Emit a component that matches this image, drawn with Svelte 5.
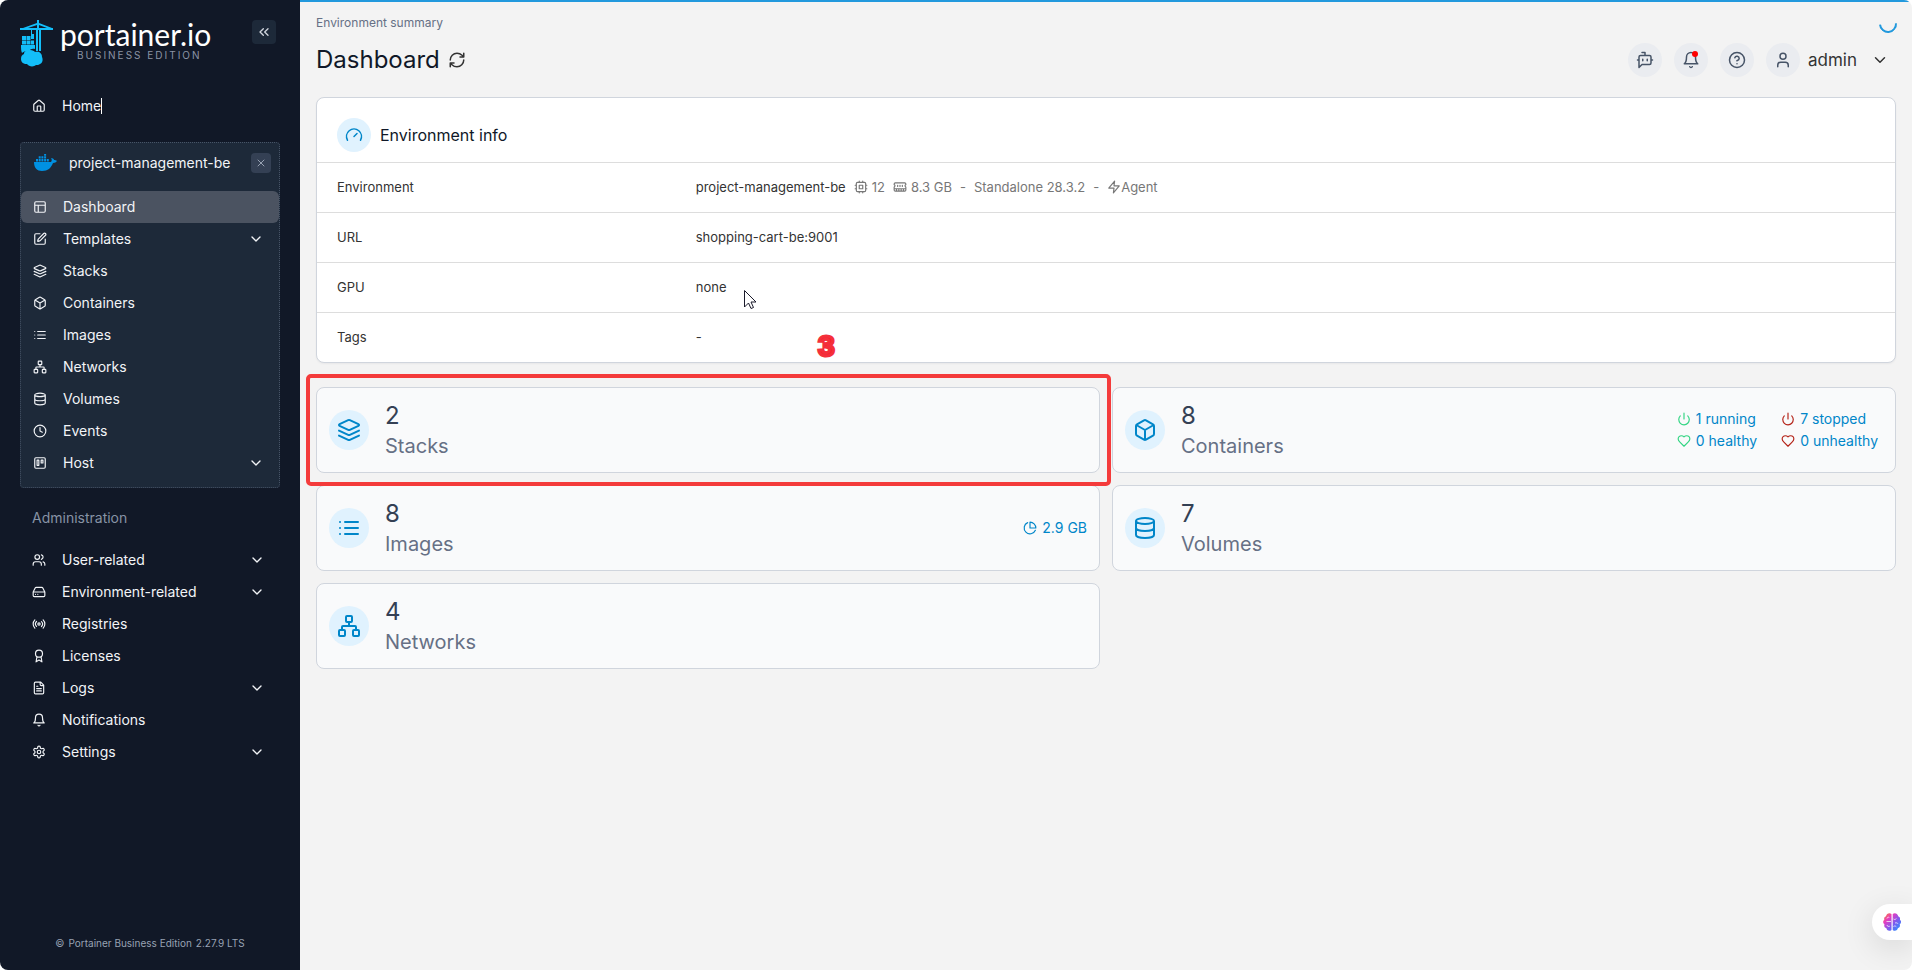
<script>
	const circle = (cx, cy, r) => `M${cx - r} ${cy}a${r} ${r} 0 1 0 ${r * 2} 0a${r} ${r} 0 1 0 ${-r * 2} 0`;

	const icons = {
		home: 'M15 21v-8a1 1 0 0 0-1-1h-4a1 1 0 0 0-1 1v8M3 10a2 2 0 0 1 .709-1.528l7-5.999a2 2 0 0 1 2.582 0l7 5.999A2 2 0 0 1 21 10v9a2 2 0 0 1-2 2H5a2 2 0 0 1-2-2z',
		layout: 'M5 3h14a2 2 0 0 1 2 2v14a2 2 0 0 1-2 2H5a2 2 0 0 1-2-2V5a2 2 0 0 1 2-2zM3 9h18M9 21V9',
		edit: 'M12 3H5a2 2 0 0 0-2 2v14a2 2 0 0 0 2 2h14a2 2 0 0 0 2-2v-7M18.375 2.625a1 1 0 0 1 3 3l-9.013 9.014a2 2 0 0 1-.853.505l-2.873.84a.5.5 0 0 1-.62-.62l.84-2.873a2 2 0 0 1 .506-.852z',
		layers: 'm12.83 2.18a2 2 0 0 0-1.66 0L2.6 6.08a1 1 0 0 0 0 1.83l8.58 3.91a2 2 0 0 0 1.66 0l8.58-3.9a1 1 0 0 0 0-1.83ZM22 17.65l-9.17 4.16a2 2 0 0 1-1.66 0L2 17.65M22 12.65l-9.17 4.16a2 2 0 0 1-1.66 0L2 12.65',
		box: 'M21 8a2 2 0 0 0-1-1.73l-7-4a2 2 0 0 0-2 0l-7 4A2 2 0 0 0 3 8v8a2 2 0 0 0 1 1.73l7 4a2 2 0 0 0 2 0l7-4A2 2 0 0 0 21 16ZM3.3 7l8.7 5 8.7-5M12 22V12',
		list: 'M8 6h13M8 12h13M8 18h13M3 6h.01M3 12h.01M3 18h.01',
		network: 'M17 16h4a1 1 0 0 1 1 1v4a1 1 0 0 1-1 1h-4a1 1 0 0 1-1-1v-4a1 1 0 0 1 1-1zM3 16h4a1 1 0 0 1 1 1v4a1 1 0 0 1-1 1H3a1 1 0 0 1-1-1v-4a1 1 0 0 1 1-1zM10 2h4a1 1 0 0 1 1 1v4a1 1 0 0 1-1 1h-4a1 1 0 0 1-1-1V3a1 1 0 0 1 1-1zM5 16v-3a1 1 0 0 1 1-1h12a1 1 0 0 1 1 1v3M12 12V8',
		database: 'M3 5a9 3 0 1 0 18 0a9 3 0 1 0-18 0M3 5v14a9 3 0 0 0 18 0V5M3 12a9 3 0 0 0 18 0',
		clock: circle(12, 12, 10) + 'M12 6v6l4 2',
		trello: 'M5 3h14a2 2 0 0 1 2 2v14a2 2 0 0 1-2 2H5a2 2 0 0 1-2-2V5a2 2 0 0 1 2-2zM7 7h3v9H7zM14 7h3v5h-3z',
		users: 'M16 21v-2a4 4 0 0 0-4-4H6a4 4 0 0 0-4 4v2M22 21v-2a4 4 0 0 0-3-3.87M16 3.13a4 4 0 0 1 0 7.75' + circle(9, 7, 4),
		drive: 'M22 12H2M5.45 5.11 2 12v6a2 2 0 0 0 2 2h16a2 2 0 0 0 2-2v-6l-3.45-6.89A2 2 0 0 0 16.76 4H7.24a2 2 0 0 0-1.79 1.11zM6 16h.01M10 16h.01',
		radio: 'M4.9 19.1C1 15.2 1 8.8 4.9 4.9M7.8 16.2c-2.3-2.3-2.3-6.1 0-8.5M16.2 7.8c2.3 2.3 2.3 6.1 0 8.5M19.1 4.9C23 8.8 23 15.1 19.1 19' + circle(12, 12, 2),
		award: 'M15.477 12.89 17 22l-5-3-5 3 1.523-9.11' + circle(12, 8, 6),
		file: 'M15 2H6a2 2 0 0 0-2 2v16a2 2 0 0 0 2 2h12a2 2 0 0 0 2-2V7ZM14 2v4a2 2 0 0 0 2 2h4M10 9H8M16 13H8M16 17H8',
		bell: 'M6 8a6 6 0 0 1 12 0c0 7 3 9 3 9H3s3-2 3-9M10.3 21a1.94 1.94 0 0 0 3.4 0',
		settings: 'M12.22 2h-.44a2 2 0 0 0-2 2v.18a2 2 0 0 1-1 1.73l-.43.25a2 2 0 0 1-2 0l-.15-.08a2 2 0 0 0-2.73.73l-.22.38a2 2 0 0 0 .73 2.73l.15.1a2 2 0 0 1 1 1.72v.51a2 2 0 0 1-1 1.74l-.15.09a2 2 0 0 0-.73 2.73l.22.38a2 2 0 0 0 2.73.73l.15-.08a2 2 0 0 1 2 0l.43.25a2 2 0 0 1 1 1.73V20a2 2 0 0 0 2 2h.44a2 2 0 0 0 2-2v-.18a2 2 0 0 1 1-1.73l.43-.25a2 2 0 0 1 2 0l.15.08a2 2 0 0 0 2.73-.73l.22-.39a2 2 0 0 0-.73-2.73l-.15-.08a2 2 0 0 1-1-1.74v-.5a2 2 0 0 1 1-1.74l.15-.09a2 2 0 0 0 .73-2.73l-.22-.38a2 2 0 0 0-2.73-.73l-.15.08a2 2 0 0 1-2 0l-.43-.25a2 2 0 0 1-1-1.73V4a2 2 0 0 0-2-2z' + circle(12, 12, 3),
		gauge: 'm12 14 4-4M3.34 19a10 10 0 1 1 17.32 0',
		refresh: 'M3 12a9 9 0 0 1 9-9 9.75 9.75 0 0 1 6.74 2.74L21 8M21 3v5h-5M21 12a9 9 0 0 1-9 9 9.75 9.75 0 0 1-6.74-2.74L3 16M8 16H3v5',
		bot: 'M12 6V2H8M8 18l-4 4V8a2 2 0 0 1 2-2h12a2 2 0 0 1 2 2v8a2 2 0 0 1-2 2ZM2 12h2M9 11v2M15 11v2M20 12h2',
		help: circle(12, 12, 10) + 'M9.09 9a3 3 0 0 1 5.83 1c0 2-3 3-3 3M12 17h.01',
		user: 'M19 21v-2a4 4 0 0 0-4-4H9a4 4 0 0 0-4 4v2' + circle(12, 7, 4),
		cpu: 'M6 4h12a2 2 0 0 1 2 2v12a2 2 0 0 1-2 2H6a2 2 0 0 1-2-2V6a2 2 0 0 1 2-2zM9 9h6v6H9zM15 2v2M15 20v2M2 15h2M2 9h2M20 15h2M20 9h2M9 2v2M9 20v2',
		memory: 'M6 19v-3M10 19v-3M14 19v-3M18 19v-3M8 11V9M16 11V9M12 11V9M2 15h20M2 7a2 2 0 0 1 2-2h16a2 2 0 0 1 2 2v1.1a2 2 0 0 0 0 3.837V17a2 2 0 0 1-2 2H4a2 2 0 0 1-2-2v-5.1a2 2 0 0 0 0-3.837Z',
		zap: 'M13 2 3 14h9l-1 8 10-12h-9l1-8z',
		pie: 'M21.21 15.89A10 10 0 1 1 8 2.83M22 12A10 10 0 0 0 12 2v10z',
		power: 'M12 2v10M18.4 6.6a9 9 0 1 1-12.77.04',
		heart: 'M19 14c1.49-1.46 3-3.21 3-5.5A5.5 5.5 0 0 0 16.5 3c-1.76 0-3 .5-4.5 2-1.5-1.5-2.74-2-4.5-2A5.5 5.5 0 0 0 2 8.5c0 2.3 1.5 4.05 3 5.5l7 7Z',
		down: 'm6 9 6 6 6-6',
		collapse: 'm11 17-5-5 5-5M18 17l-5-5 5-5',
		close: 'M18 6 6 18M6 6l12 12'
	};

	const envItems = [
		{ label: 'Dashboard', icon: 'layout', active: true },
		{ label: 'Templates', icon: 'edit', open: true },
		{ label: 'Stacks', icon: 'layers' },
		{ label: 'Containers', icon: 'box' },
		{ label: 'Images', icon: 'list' },
		{ label: 'Networks', icon: 'network' },
		{ label: 'Volumes', icon: 'database' },
		{ label: 'Events', icon: 'clock' },
		{ label: 'Host', icon: 'trello', open: true }
	];

	const adminItems = [
		{ label: 'User-related', icon: 'users', open: true },
		{ label: 'Environment-related', icon: 'drive', open: true },
		{ label: 'Registries', icon: 'radio' },
		{ label: 'Licenses', icon: 'award' },
		{ label: 'Logs', icon: 'file', open: true },
		{ label: 'Notifications', icon: 'bell' },
		{ label: 'Settings', icon: 'settings', open: true }
	];

	const cards = [
		{ count: 2, label: 'Stacks', icon: 'layers', marked: true },
		{ count: 8, label: 'Containers', icon: 'box', status: true },
		{ count: 8, label: 'Images', icon: 'list', size: '2.9 GB' },
		{ count: 7, label: 'Volumes', icon: 'database' },
		{ count: 4, label: 'Networks', icon: 'network' }
	];

	const statuses = [
		{ text: '1 running', icon: 'power', ok: true },
		{ text: '7 stopped', icon: 'power', ok: false },
		{ text: '0 healthy', icon: 'heart', ok: true },
		{ text: '0 unhealthy', icon: 'heart', ok: false }
	];
</script>

{#snippet icon(name, size = 14)}
	<svg class="icon" width={size} height={size} viewBox="0 0 24 24" aria-hidden="true">
		<path d={icons[name]} />
	</svg>
{/snippet}

{#snippet navItem(item)}
	<li>
		<a href="#{item.label.toLowerCase()}" class="nav-item" class:active={item.active}>
			{@render icon(item.icon)}
			<span class="nav-label">{item.label}</span>
			{#if item.open}{@render icon('down', 16)}{/if}
		</a>
	</li>
{/snippet}

<div class="page">
	<aside class="sidebar">
		<div class="brand">
			<a href="#home" class="logo" aria-label="portainer.io Business Edition">
				<svg width="34" height="47" viewBox="0 0 34 47" fill="#13bef9" aria-hidden="true">
					<path d="M17 0h2v3l13 5h1v2h-12v21h-2V10h-1v21h-2V10H0V8h3l14-5zM17 5 8 8h9zM19 5v3h8z" />
					<path d="M11 10h1v4h2v3h-3zM11 15h3v4h-3zM2 16h4v4H2zM6.500 16h4v4h-4zM2 20.500h4v4H2zM6.500 20.500h3.500v4H6.500zM10.500 20.500H14v4h-3.500z" />
					<path d="M1 25h14v4c-3-1-6 1-7 3-3-1-5 0-6 1-1-2-1-5-1-8z" />
					<path d="M10 30c3 0 4 1 5 2 4-1 7 1 7 5 1 2 1 6-2 7-1 1-3 1-4 1-2 2-7 2-9-1-4 0-6-2-6-5s1-4 3-5c0-3 3-4 6-4z" />
				</svg>
				<span class="wordmark">
					<span class="name">portainer.io</span>
					<span class="edition">BUSINESS EDITION</span>
				</span>
			</a>
			<button class="collapse" aria-label="Collapse sidebar">{@render icon('collapse', 16)}</button>
		</div>

		<a href="#home" class="nav-item">
			{@render icon('home')}
			<span class="home-label">Home</span>
		</a>

		<nav class="env" aria-label="Environment">
			<div class="env-head">
				<svg width="24" height="18" viewBox="0 0 24 18" fill="#0091e2" aria-hidden="true">
					<path d="M1 8h17c1-1 1-3 0-4 2 0 3 1 3 2 1 0 2 0 3 1-1 1-2 2-4 2-2 5-5 8-11 8-5 0-8-3-8-9zM3 5h2v2.500H3zM5.700 5h2v2.500h-2zM8.400 5h2v2.500h-2zM11.100 5h2v2.500h-2zM13.800 5h2v2.500h-2zM5.700 2.200h2v2.400h-2zM8.400 2.200h2v2.400h-2zM11.100 2.200h2v2.400h-2zM11.100 0h2v1.800h-2z" />
				</svg>
				<span class="nav-label">project-management-be</span>
				<button class="close" aria-label="Close environment">{@render icon('close', 12)}</button>
			</div>
			<ul>
				{#each envItems as item}{@render navItem(item)}{/each}
			</ul>
		</nav>

		<nav aria-labelledby="admin-title">
			<h2 id="admin-title">Administration</h2>
			<ul>
				{#each adminItems as item}{@render navItem(item)}{/each}
			</ul>
		</nav>

		<footer>
			<span>©</span>
			<span>Portainer Business Edition</span>
			<span>2.27.9 LTS</span>
		</footer>
	</aside>

	<main>
		<div class="progress"></div>
		<div class="spinner"></div>
		<div class="crumb">Environment summary</div>
		<header>
			<h1>Dashboard</h1>
			<button class="refresh" aria-label="Refresh">{@render icon('refresh', 18)}</button>
			<div class="tools">
				<button class="round" aria-label="Assistant">{@render icon('bot', 18)}</button>
				<button class="round" aria-label="Notifications">
					{@render icon('bell', 18)}
					<span class="dot"></span>
				</button>
				<button class="round" aria-label="Help">{@render icon('help', 18)}</button>
				<button class="account">
					<span class="round">{@render icon('user', 18)}</span>
					<span class="account-name">admin</span>
					{@render icon('down', 18)}
				</button>
			</div>
		</header>

		<section class="panel">
			<div class="panel-head">
				<span class="round blue">{@render icon('gauge', 18)}</span>
				<h2>Environment info</h2>
			</div>
			<table>
				<tbody>
					<tr>
						<th scope="row">Environment</th>
						<td>
							<div class="env-value">
								<span>project-management-be</span>
								<span class="muted spec">{@render icon('cpu')} 12</span>
								<span class="muted spec">{@render icon('memory')} 8.3 GB</span>
								<span class="muted">-</span>
								<span class="muted">Standalone 28.3.2</span>
								<span class="muted">-</span>
								<span class="muted agent">{@render icon('zap')}Agent</span>
							</div>
						</td>
					</tr>
					<tr>
						<th scope="row">URL</th>
						<td>shopping-cart-be:9001</td>
					</tr>
					<tr>
						<th scope="row">GPU</th>
						<td class="gpu">
							none
							<svg class="cursor" width="13" height="20" viewBox="0 0 13 20" aria-hidden="true">
								<path d="M.5.500v16.500l4-4 2.500 5.500 2.500-1-2.500-5.500h5z" fill="#fff" stroke="#1a1a2b" />
							</svg>
						</td>
					</tr>
					<tr>
						<th scope="row">Tags</th>
						<td>-</td>
					</tr>
				</tbody>
			</table>
			<span class="step">3</span>
		</section>

		<div class="cards">
			{#each cards as card}
				<a href="#{card.label.toLowerCase()}" class="card" class:marked={card.marked}>
					<span class="badge">{@render icon(card.icon, 24)}</span>
					<span class="figures">
						<span class="count">{card.count}</span>
						<span class="label">{card.label}</span>
					</span>
					{#if card.size}
						<span class="size">{@render icon('pie')}{card.size}</span>
					{/if}
					{#if card.status}
						<span class="statuses">
							{#each statuses as status}
								<span class="status" class:ok={status.ok}>{@render icon(status.icon)}{status.text}</span>
							{/each}
						</span>
					{/if}
				</a>
			{/each}
		</div>

		<button class="brain" aria-label="Open assistant">
			<svg width="18" height="18" viewBox="0 0 18 18" aria-hidden="true">
				<defs>
					<linearGradient id="brain-fill" x1="0" y1="0" x2="1" y2="1">
						<stop offset="0" stop-color="#ff8a1f" />
						<stop offset="0.3" stop-color="#e63cc0" />
						<stop offset="0.6" stop-color="#7b5cf0" />
						<stop offset="1" stop-color="#1ea0ff" />
					</linearGradient>
				</defs>
				<path
					fill="url(#brain-fill)"
					d="M8.500 1v16C6 19 3.500 17 3.300 15 1.500 14.500.8 13 1.500 11.500-.3 10-.3 8 1.300 6.800.8 5 1.500 3.800 3 3.300 3.500.500 6.500-.5 8.500 1zM9.700 1v16c2.500 2 5 0 5.200-2 1.800-.5 2.500-2 1.800-3.500 1.800-1.500 1.800-3.500.2-4.700.5-1.800-.2-3-1.700-3.500C14.700.500 11.700-.5 9.700 1z"
				/>
				<path
					d="M8 8.500H3.500M4 5.500c.2-1.300 1.300-1.500 2.300-1M4 12c.2 1.400 1.500 1.800 2.800 1.200M10.500 6c1 .8 2.300.5 2.800-.5M12 10c1.500-.5 2.500 0 3 .8M10.500 13.500c1-.8 2-.6 2.800.2"
					fill="none"
					stroke="#fff"
					stroke-opacity="0.7"
				/>
			</svg>
		</button>
	</main>
</div>

<style>
	:global(body) {
		margin: 0;
		background: #fff;
	}
	.page {
		display: flex;
		min-height: 100vh;
		border-radius: 8px;
		overflow: hidden;
		background: #f3f3f3;
		font-family: Inter, 'Liberation Sans', sans-serif;
		font-size: 14px;
		line-height: 20px;
	}
	button {
		padding: 0;
		border: none;
		background: none;
		font: inherit;
		color: inherit;
		cursor: pointer;
	}
	a {
		color: inherit;
		text-decoration: none;
	}
	ul {
		margin: 0;
		padding: 0;
		list-style: none;
	}
	h1,
	h2 {
		margin: 0;
		font-weight: 400;
	}
	.icon {
		flex: none;
		fill: none;
		stroke: currentColor;
		stroke-width: 2;
		stroke-linecap: round;
		stroke-linejoin: round;
	}

	/* sidebar */
	.sidebar {
		display: flex;
		flex-direction: column;
		flex: none;
		box-sizing: border-box;
		width: 300px;
		padding: 20px 20px 17px;
		background: #111827;
		color: #f2f4f7;
	}
	.brand {
		display: flex;
		justify-content: space-between;
		align-items: flex-start;
		margin-bottom: 23px;
		padding-right: 4px;
	}
	.logo {
		display: flex;
		gap: 6px;
	}
	.wordmark {
		display: flex;
		flex-direction: column;
	}
	.name {
		font-family: Lato, sans-serif;
		font-size: 30px;
		line-height: 29px;
		color: #fff;
	}
	.edition {
		padding-left: 17px;
		font-size: 10px;
		line-height: 12px;
		letter-spacing: 2px;
		color: #8b94a5;
	}
	.collapse,
	.close {
		display: flex;
		align-items: center;
		justify-content: center;
		border-radius: 4px;
		color: #d0d5dd;
	}
	.collapse {
		width: 24px;
		height: 24px;
		background: #1d2939;
	}
	.close {
		width: 20px;
		height: 20px;
		background: #344054;
		color: #98a2b3;
	}
	.nav-item {
		display: flex;
		align-items: center;
		gap: 16px;
		height: 32px;
		padding: 0 15px 0 12px;
		border-radius: 6px;
	}
	.nav-item.active {
		background: #4b5361;
	}
	.nav-label {
		flex: 1;
	}
	.home-label {
		border-right: 1px solid #fff;
		line-height: 16px;
	}
	.env {
		margin: 20px 0;
		padding-bottom: 8px;
		border: 1px dotted #475467;
		border-radius: 4px;
		background: #1d2939;
	}
	.env-head {
		display: flex;
		align-items: center;
		gap: 12px;
		height: 40px;
		margin-bottom: 8px;
		padding: 0 8px 0 12px;
	}
	#admin-title {
		margin-bottom: 16px;
		padding-left: 12px;
		font-size: 14px;
		color: #8793a5;
	}
	footer {
		display: flex;
		justify-content: center;
		gap: 4px;
		margin-top: auto;
		font-size: 10px;
		color: #98a2b3;
	}

	/* content */
	main {
		position: relative;
		flex: 1;
		min-width: 0;
		padding: 15px 16px;
		color: #101828;
	}
	.progress {
		position: absolute;
		top: 0;
		left: 0;
		right: 0;
		height: 2px;
		background: #29d;
	}
	.spinner {
		position: absolute;
		top: 15px;
		right: 15px;
		box-sizing: border-box;
		width: 18px;
		height: 18px;
		border: 2px solid transparent;
		border-bottom-color: #29d;
		border-left-color: #29d;
		border-radius: 50%;
		transform: rotate(-50deg);
	}
	.crumb {
		font-size: 12px;
		line-height: 16px;
		color: #667085;
	}
	header {
		display: flex;
		align-items: center;
		margin: 12px 0 20px;
	}
	h1 {
		font-size: 24px;
		line-height: 34px;
	}
	.refresh {
		display: flex;
		margin-left: 8px;
		color: #333;
	}
	.tools {
		display: flex;
		gap: 12px;
		margin-left: auto;
	}
	.round {
		position: relative;
		display: flex;
		align-items: center;
		justify-content: center;
		width: 34px;
		height: 34px;
		border-radius: 50%;
		background: #eaecf0;
		color: #475467;
	}
	.round.blue {
		background: #e0f2fe;
		color: #0086c9;
	}
	.dot {
		position: absolute;
		top: 8px;
		right: 10px;
		width: 6px;
		height: 6px;
		border-radius: 50%;
		background: #f00;
	}
	.account {
		display: flex;
		align-items: center;
		padding-right: 7px;
		color: #333;
	}
	.account-name {
		margin: 0 14px 0 8px;
		font-size: 17px;
	}
	.panel {
		position: relative;
		border: 1px solid #d0d5dd;
		border-radius: 8px;
		background: #fff;
		box-shadow: 0 1px 2px #1018280d;
	}
	.panel-head {
		display: flex;
		align-items: center;
		gap: 9px;
		padding: 20px 20px 10px;
	}
	.panel-head h2 {
		font-size: 16px;
	}
	table {
		width: 100%;
		table-layout: fixed;
		border-collapse: separate;
		border-spacing: 0;
		font-size: 13px;
		color: #333;
	}
	th,
	td {
		box-sizing: border-box;
		height: 50px;
		padding: 0 0 2px;
		border-top: 1px solid #ddd;
		text-align: left;
		font-weight: 400;
	}
	th {
		width: 24%;
		padding-left: 20px;
	}
	.env-value,
	.spec,
	.agent {
		display: flex;
		align-items: center;
	}
	.env-value {
		gap: 8px;
	}
	.spec {
		gap: 4px;
	}
	.muted {
		color: #777;
	}
	.gpu {
		position: relative;
	}
	.cursor {
		position: absolute;
		left: 48px;
		top: 27px;
	}
	.step {
		position: absolute;
		left: 501px;
		bottom: -1px;
		font-family: 'Liberation Sans', sans-serif;
		font-size: 30px;
		line-height: 34px;
		font-weight: 700;
		color: #fb1f2e;
		-webkit-text-stroke: 3px #f4303b;
		stroke-linejoin: round;
	}
	.cards {
		display: grid;
		grid-template-columns: 1fr 1fr;
		gap: 12px;
		margin-top: 24px;
	}
	.card {
		position: relative;
		display: flex;
		align-items: center;
		gap: 16px;
		box-sizing: border-box;
		height: 86px;
		padding: 0 12px;
		border: 1px solid #d0d5dd;
		border-radius: 8px;
		background: #f9fafb;
	}
	.marked::after {
		content: '';
		position: absolute;
		z-index: 1;
		inset: -14px -12px -14px -11px;
		border: 4px solid #f43b3b;
		border-radius: 5px;
	}
	.badge {
		display: flex;
		align-items: center;
		justify-content: center;
		width: 40px;
		height: 40px;
		border-radius: 50%;
		background: #e0f2fe;
		color: #0086c9;
	}
	.figures {
		display: flex;
		flex-direction: column;
		flex: 1;
		padding-top: 2px;
		line-height: 30px;
	}
	.count {
		font-size: 24px;
		color: #344054;
	}
	.label {
		font-size: 20px;
		color: #667085;
	}
	.size,
	.status {
		display: flex;
		align-items: center;
		gap: 5px;
		color: #0086c9;
	}
	.statuses {
		display: grid;
		grid-template-columns: auto auto;
		gap: 2px 24px;
		padding-right: 5px;
	}
	.status .icon {
		color: #b42318;
	}
	.status.ok .icon {
		color: #32d583;
	}
	.brain {
		position: absolute;
		right: 0;
		bottom: 30px;
		display: flex;
		align-items: center;
		width: 40px;
		height: 36px;
		padding-left: 11px;
		border-radius: 18px 0 0 18px;
		background: #fff;
		box-shadow: 0 8px 32px #0000001f;
	}
</style>
